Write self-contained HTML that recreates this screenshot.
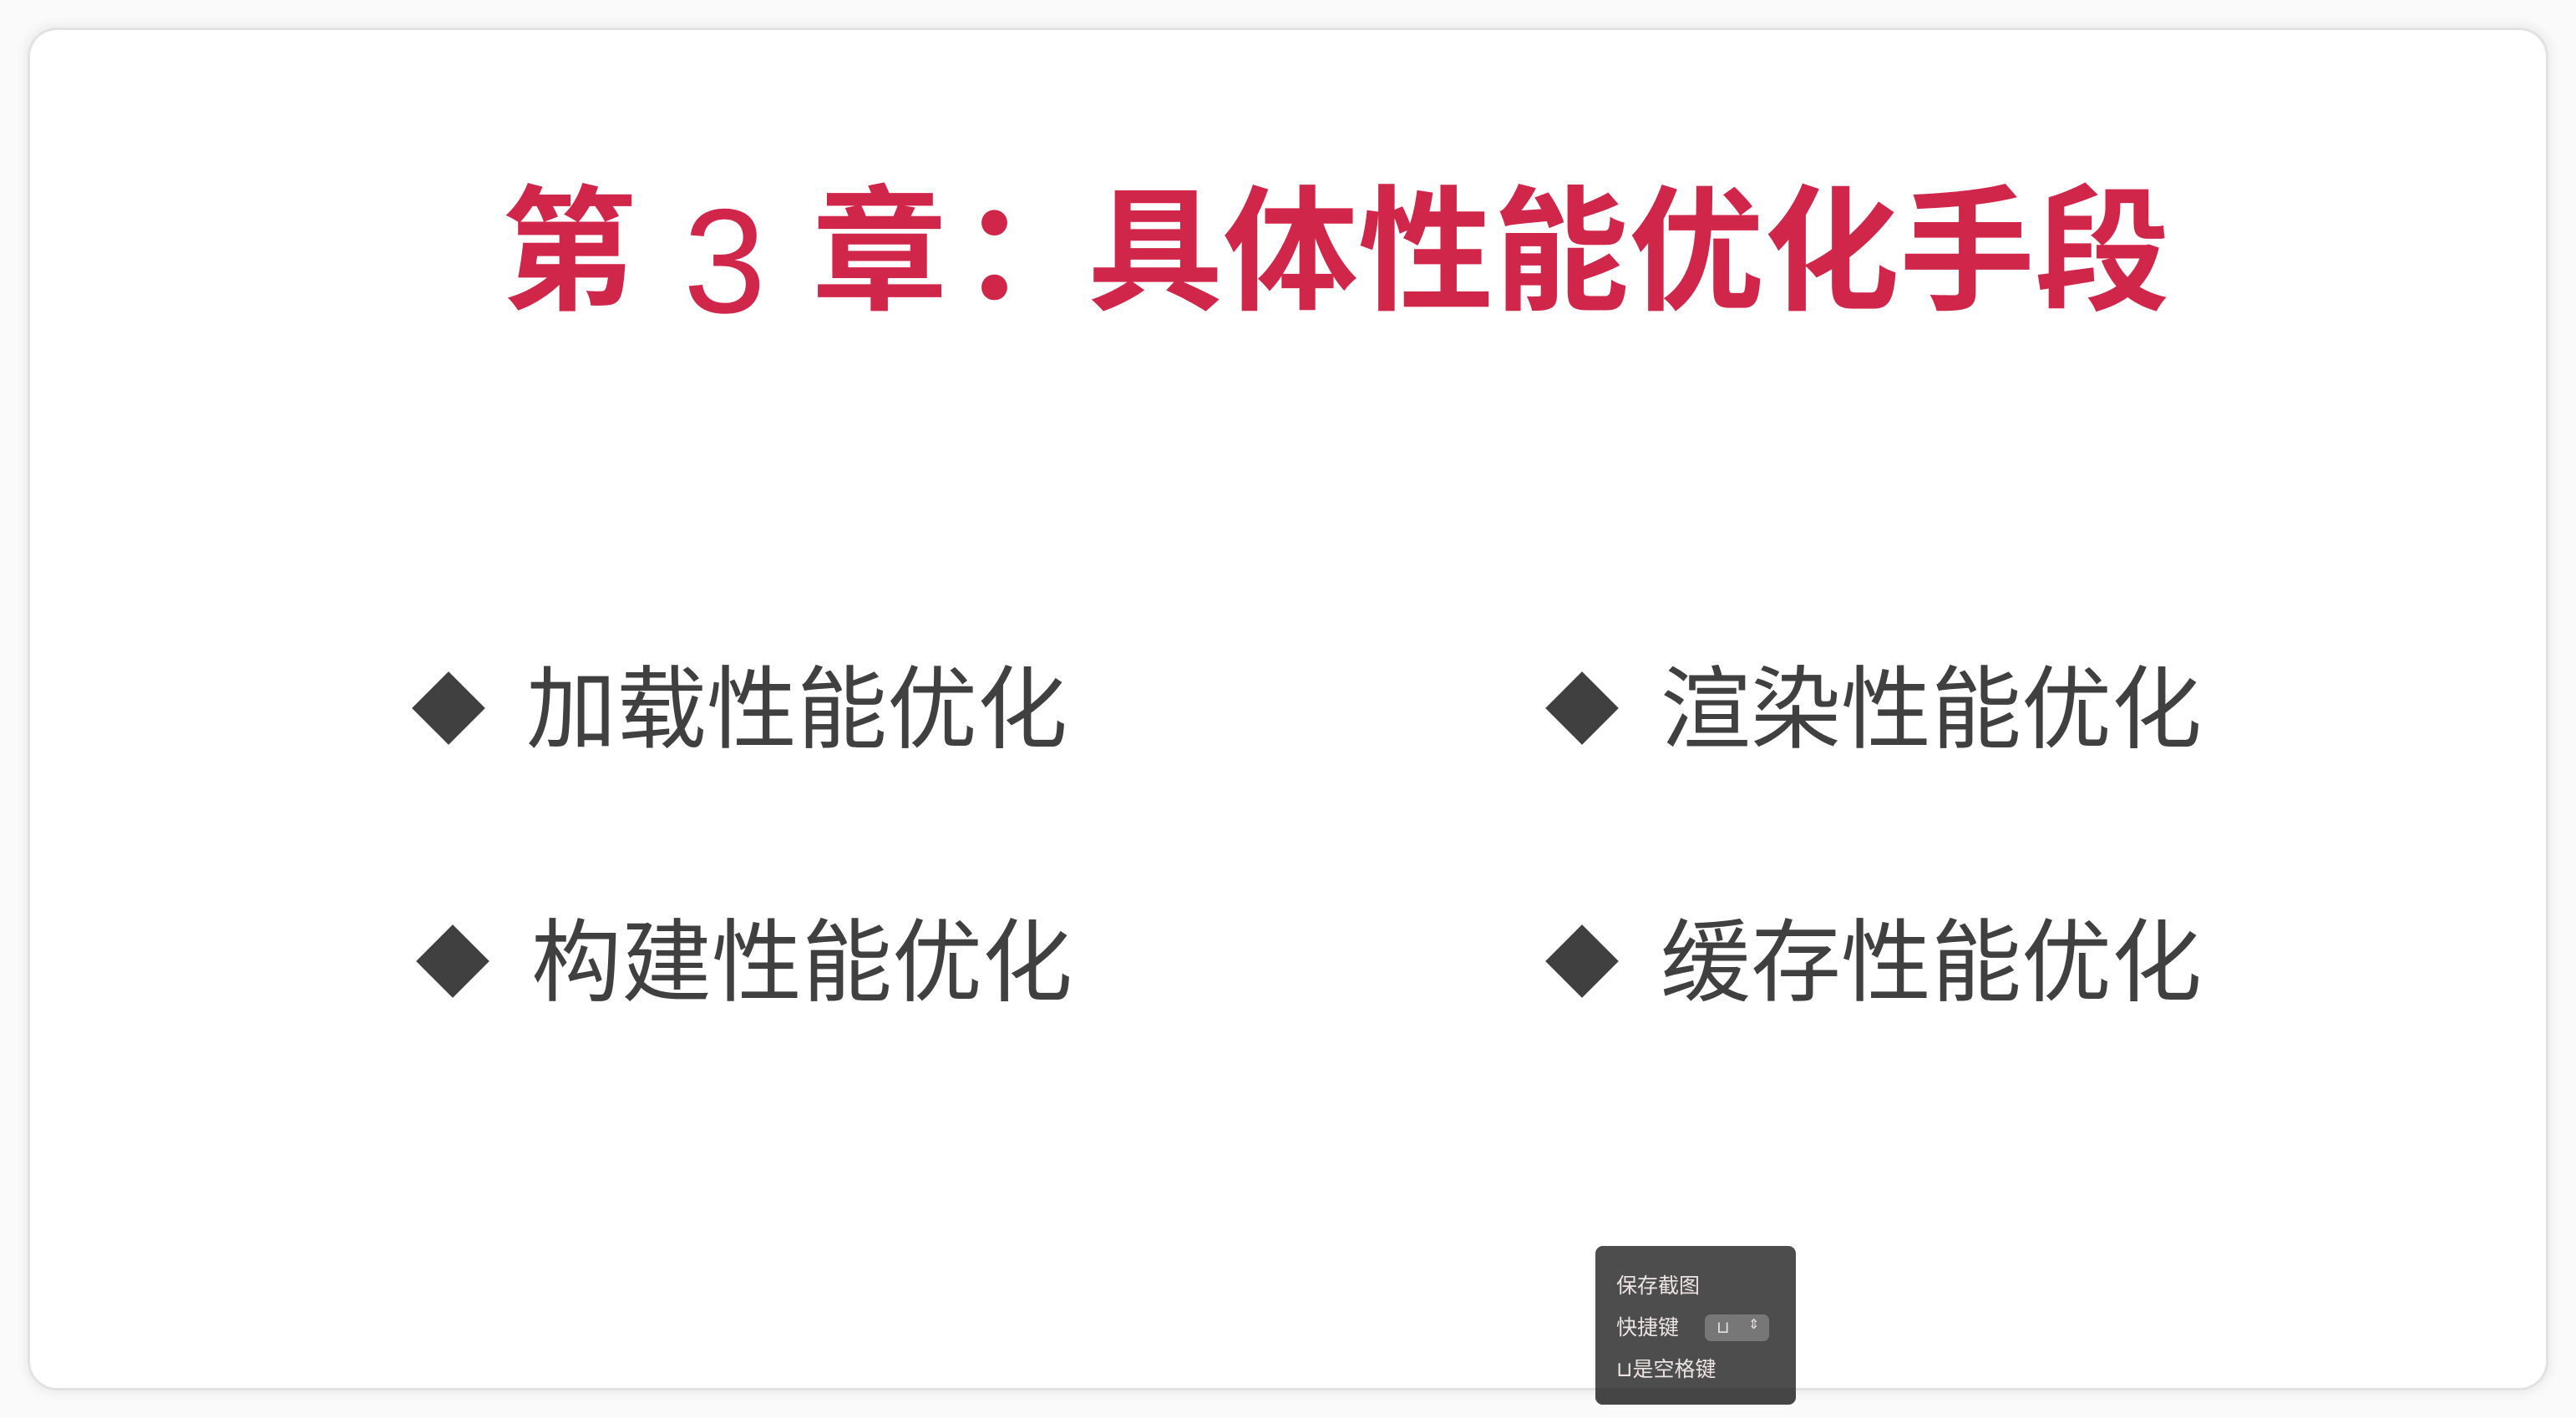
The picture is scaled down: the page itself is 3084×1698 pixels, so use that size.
<!DOCTYPE html>
<html><head><meta charset="utf-8"><style>
body{margin:0;width:3084px;height:1698px;background:#fafafa;position:relative;overflow:hidden;font-family:"Liberation Sans","Noto Sans CJK SC",sans-serif}
.card{position:absolute;left:36px;top:36px;width:3012px;height:1626px;background:#fff;border-radius:32px;box-shadow:0 0 0 3px #e2e2e2,0 0 10px 8px #eeeeee}
.t{position:absolute;color:#d0264a;font-weight:bold;font-size:162px;line-height:1;top:222px;white-space:nowrap}
.it{position:absolute;color:#404040;font-size:108px;line-height:1;white-space:nowrap}
.d{position:absolute;width:62px;height:62px;background:#404040;transform:rotate(45deg)}
.toast{position:absolute;left:1910px;top:1492px;width:240px;height:190px;background:#4d4d4d;border-radius:9px;overflow:hidden;color:#ece4e4;font-size:25px}
.toast div{position:absolute;left:25px;white-space:nowrap;line-height:1}
</style></head><body>
<div class="card"></div>
<div class="t" style="left:600px">第</div>
<div class="t" style="left:818px;font-family:'Liberation Sans',sans-serif;font-weight:normal;top:224px;font-size:178px">3</div>
<div class="t" style="left:972px">章</div>
<div class="t" style="left:1150px">：</div>
<div class="t" style="left:1302px">具体性能优化手段</div>

<div class="d" style="left:506px;top:817px"></div>
<div class="it" style="left:630px;top:796px">加载性能优化</div>
<div class="d" style="left:1863px;top:817px"></div>
<div class="it" style="left:1988px;top:796px">渲染性能优化</div>
<div class="d" style="left:511px;top:1120px"></div>
<div class="it" style="left:636px;top:1099px">构建性能优化</div>
<div class="d" style="left:1863px;top:1120px"></div>
<div class="it" style="left:1988px;top:1099px">缓存性能优化</div>

<div class="toast">
<div style="top:36px">保存截图</div>
<div style="top:86px">快捷键</div>
<div style="left:131px;top:82px;width:77px;height:32px;background:#777;border-radius:7px;font-size:20px"><span style="position:absolute;left:14px;top:6px">⊔</span><span style="position:absolute;left:52px;top:5px;font-size:16px">⇕</span></div>
<div style="top:136px">⊔是空格键</div>
<div style="left:0;top:170px;width:240px;height:20px;background:#454545"></div>
</div>
</body></html>
